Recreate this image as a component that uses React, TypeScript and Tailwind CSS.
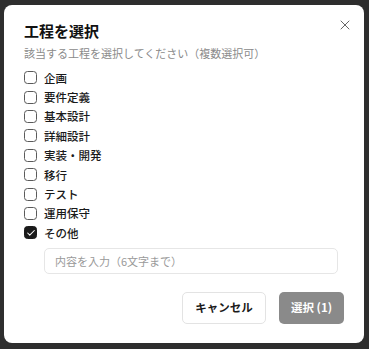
import { useState } from 'react';
import { X, Check } from 'lucide-react';

const PROCESSES = ['企画', '要件定義', '基本設計', '詳細設計', '実装・開発', '移行', 'テスト', '運用保守', 'その他'];

export default function App() {
  const [selected, setSelected] = useState<string[]>(['その他']);
  const [other, setOther] = useState('');

  const toggle = (name: string) => {
    setSelected((prev) => (prev.includes(name) ? prev.filter((n) => n !== name) : [...prev, name]));
  };

  return (
    <div
      className="w-[369px] h-[349px] bg-[#2e2e2e] pt-[5px] pl-[4px]"
      style={{ fontFamily: '"Noto Sans CJK JP", "Noto Sans", sans-serif' }}
    >
      <div className="relative w-[360px] h-[338px] bg-white rounded-[8px] px-[20px] pt-[15px]">
        <button className="absolute right-[11px] top-[12px] text-[#666]">
          <X size={16} strokeWidth={1.5} />
        </button>

        {/* HEADER */}
        <h2 className="text-[15px] leading-[22px] font-bold text-[#111]">工程を選択</h2>
        <p className="mt-[3px] text-[11px] leading-[16px] text-[#8a8a8a]">該当する工程を選択してください（複数選択可）</p>

        {/* OPTIONS */}
        <div className="mt-[7px] flex flex-col">
          {PROCESSES.map((name) => {
            const checked = selected.includes(name);
            return (
              <label key={name} className="flex items-center gap-[7px] h-[19.4px] cursor-pointer">
                <span
                  onClick={() => toggle(name)}
                  className={`w-[13px] h-[13px] rounded-[3.5px] flex items-center justify-center ${
                    checked ? 'bg-[#1a1a1a] border border-[#1a1a1a]' : 'border border-[#5a5a5a] bg-white'
                  }`}
                >
                  {checked && <Check size={10} strokeWidth={2.5} className="text-white" />}
                </span>
                <span className="text-[11.5px] leading-[16px] font-medium text-[#1a1a1a]">{name}</span>
              </label>
            );
          })}
        </div>

        {selected.includes('その他') && (
          <div className="pl-[20px] mt-[4px]">
            <input
              value={other}
              maxLength={6}
              onChange={(e) => setOther(e.target.value)}
              placeholder="内容を入力（6文字まで）"
              className="w-[294px] h-[26px] rounded-[5px] border border-[#e6e6e6] px-[10px] text-[11px] text-[#333] placeholder:text-[#9a9a9a] outline-none"
            />
          </div>
        )}

        {/* ACTIONS */}
        <div className="mt-[18px] flex justify-end gap-[13px]">
          <button className="w-[84px] h-[32px] rounded-[5px] border border-[#e3e3e3] bg-white text-[11.5px] font-bold text-[#1a1a1a]">
            キャンセル
          </button>
          <button className="w-[65px] h-[32px] rounded-[5px] bg-[#8a8a8a] text-[11.5px] font-bold text-white">
            選択 ({selected.length})
          </button>
        </div>
      </div>
    </div>
  );
}
